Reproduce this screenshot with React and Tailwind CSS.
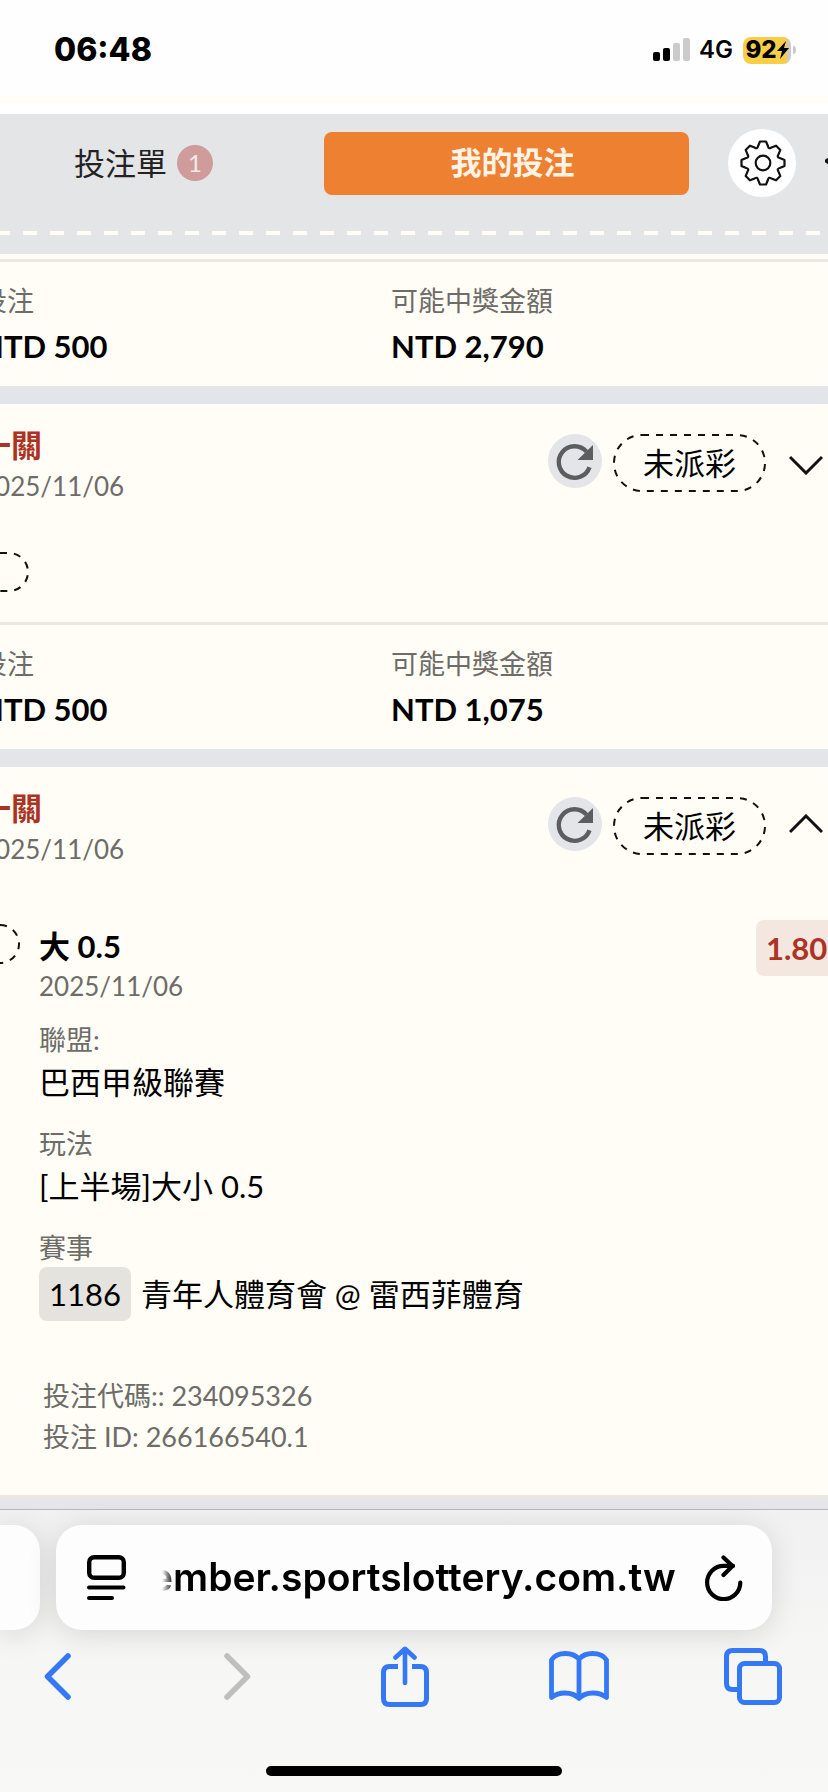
import React from "react";

const GEAR_TEETH = [0, 45, 90, 135, 180, 225, 270, 315];

function gearPath() {
  const rotate = (x, y, deg) => {
    const a = (deg * Math.PI) / 180;
    return `${(x * Math.cos(a) - y * Math.sin(a)).toFixed(2)} ${(x * Math.sin(a) + y * Math.cos(a)).toFixed(2)}`;
  };
  const parts = GEAR_TEETH.map(
    (d, i) =>
      `${i === 0 ? "M" : "L"}${rotate(-3, -21.5, d)} L${rotate(3, -21.5, d)} L${rotate(5, -16.8, d)} Q${rotate(5.6, -13.6, d)} ${rotate(-5, -16.8, d + 45)}`
  );
  return parts.join(" ") + "Z";
}

function GearIcon() {
  return (
    <svg className="size-12" viewBox="-25 -24 48 48" fill="none" stroke="#111" strokeWidth="2.2" strokeLinejoin="round">
      <path d={gearPath()} />
      <circle r="7.3" />
    </svg>
  );
}

function DashedOutline({ radius }) {
  return (
    <svg className="absolute inset-px h-[calc(100%-2px)] w-[calc(100%-2px)] overflow-visible" aria-hidden="true">
      <rect width="100%" height="100%" rx={radius} fill="none" stroke="#111" strokeWidth="2" strokeDasharray="7 7" />
    </svg>
  );
}

function StatusBar() {
  return (
    <div className="flex h-24 items-center justify-between bg-[#fefefe] pt-1 pr-8 pl-[54px] font-['Inter',sans-serif] text-black">
      <span className="text-[32px] font-extrabold">06:48</span>
      <div className="flex items-center">
        <svg className="h-6 w-[38px]" viewBox="0 0 38 24">
          <rect x="0" y="14" width="7" height="9" rx="2" />
          <rect x="10" y="10" width="7" height="13" rx="2" />
          <rect x="20" y="5" width="7" height="18" rx="2" fill="#cbcbcb" />
          <rect x="30" y="0" width="7" height="23" rx="2" fill="#cbcbcb" />
        </svg>
        <span className="ml-2 text-2xl font-semibold">4G</span>
        <div className="ml-2.5 flex h-[27px] w-12 items-center justify-center rounded-lg bg-linear-to-r from-[#f7ce46] from-92% to-[#cbcbcb] to-92%">
          <span className="text-2xl font-extrabold">92</span>
          <svg className="h-[18px] w-3" viewBox="0 0 12 18">
            <path d="M9 0 L0 10 H5 L3 18 L12 7 H7Z" />
          </svg>
        </div>
        <span className="ml-0.5 h-2 w-[3px] rounded-r-full bg-[#cbcbcb]" />
      </div>
    </div>
  );
}

function Tabs() {
  return (
    <header className="border-t-[11px] border-white bg-[#e4e5e7]">
      <div className="flex h-[98px] items-center overflow-hidden">
        <div className="flex w-[324px] shrink-0 pl-[74px]">
          <button type="button" className="flex items-center gap-2.5 text-[31px] text-[#222]">
            投注單
            <span className="flex size-9 items-center justify-center rounded-full bg-[#cf9b9b] text-2xl text-[#f3eae8]">1</span>
          </button>
        </div>
        <button type="button" className="h-[63px] grow rounded-lg bg-[#ee8131] pb-0.5 pl-3 text-[31px] font-bold text-[#fff3e6]">
          我的投注
        </button>
        <button type="button" aria-label="設定" className="ml-[39px] flex size-[68px] shrink-0 items-center justify-center rounded-full bg-white">
          <GearIcon />
        </button>
        <button type="button" aria-label="返回" className="ml-[29px] h-6 w-[3px] shrink-0 overflow-hidden">
          <svg className="h-6 w-[3px]" viewBox="0 0 3 24" fill="none" stroke="#111" strokeWidth="3">
            <path d="M8 5 L1 10 L8 15" />
          </svg>
        </button>
      </div>
      <div className="h-[42px] pt-[19px]">
        <svg className="block h-1 w-full" aria-hidden="true">
          <line x1="-4" y1="2" x2="100%" y2="2" stroke="#fffdf5" strokeWidth="4" strokeDasharray="14 13" />
        </svg>
      </div>
    </header>
  );
}

function Figure({ label, value }) {
  return (
    <div className="flex flex-col">
      <dt className="text-[27px] leading-10 text-[#6d6c68]">{label}</dt>
      <dd className="text-[31px] leading-[50px] font-bold text-black">{value}</dd>
    </div>
  );
}

function Stakes({ stake, payout }) {
  return (
    <dl className="-ml-5 grid h-[127px] grid-cols-[411px_1fr] border-t-[3px] border-[#e9e7e0] pt-[19px]">
      <Figure label="投注" value={stake} />
      <Figure label="可能中獎金額" value={payout} />
    </dl>
  );
}

function Divider() {
  return <div className="h-[18px] bg-[#e4e5e8]" />;
}

function BetHeader({ open }) {
  return (
    <div className="-ml-5 flex justify-between pt-5 pr-[5px]">
      <div>
        <h2 className="text-[31px] leading-[42px] font-bold text-[#ac3324]">一關</h2>
        <p className="text-[26px] leading-10 text-[#6d6c68]">2025/11/06</p>
      </div>
      <div className="flex h-[78px] items-center">
        <button type="button" aria-label="重新整理" className="mr-[11px] mb-1 flex size-[54px] items-center justify-center rounded-full bg-[#e4e5e8]">
          <svg className="size-[54px]" viewBox="0 0 54 54">
            <path d="M41.5 33.2 A15.8 15.8 0 1 1 38.5 17.6" fill="none" stroke="#5c5d5f" strokeWidth="4.4" />
            <path d="M45 11 V26 H29.5Z" fill="#5c5d5f" />
          </svg>
        </button>
        <span className="relative flex h-[58px] w-[153px] items-center justify-center text-[31px] text-black">
          <DashedOutline radius="28" />
          未派彩
        </span>
        <button type="button" aria-label={open ? "收合" : "展開"} className={open ? "mb-1 ml-[23px] flex h-7 w-[34px] items-center" : "mt-1 ml-[23px] flex h-7 w-[34px] items-center"}>
          <svg className="h-[20px] w-[34px]" viewBox="0 0 34 20" fill="none" stroke="#111" strokeWidth="3">
            <path d={open ? "M1 18 L17 2 L33 18" : "M1 2 L17 18 L33 2"} />
          </svg>
        </button>
      </div>
    </div>
  );
}

function Detail({ label, children }) {
  return (
    <div className="pt-4">
      <dt className="text-[27px] leading-[38px] text-[#6d6c68]">{label}</dt>
      <dd className="pb-1 text-[31px] leading-[46px] text-black">{children}</dd>
    </div>
  );
}

function OpenBet() {
  return (
    <article>
      <BetHeader open />
      <div className="-ml-5 flex pt-[51px] pb-[38px]">
        <span className="relative mt-1 h-10 w-10 shrink-0">
          <DashedOutline radius="19" />
        </span>
        <div className="ml-[19px] grow">
          <p className="text-[31px] leading-[52px] font-bold text-black">大 0.5</p>
          <p className="text-[26px] leading-7 text-[#6d6c68]">2025/11/06</p>
          <dl className="pt-[5px]">
            <Detail label="聯盟:">巴西甲級聯賽</Detail>
            <Detail label="玩法">[上半場]大小 0.5</Detail>
            <Detail label="賽事">
              <span className="flex items-center gap-2.5">
                <span className="rounded-lg bg-[#e5e3dd] px-2.5 leading-[54px]">1186</span>
                青年人體育會 @ 雷西菲體育
              </span>
            </Detail>
          </dl>
          <div className="pt-[50px] pl-1 text-[27px] leading-[41px] text-[#6d6c68]">
            <p>投注代碼:: 234095326</p>
            <p>投注 ID: 266166540.1</p>
          </div>
        </div>
        <span className="h-14 w-[72px] shrink-0 rounded-l-lg bg-[#f4e7df] pl-2.5 text-[31px] leading-[56px] font-bold text-[#ac3324]">
          1.80
        </span>
      </div>
    </article>
  );
}

function NavButton({ label, children }) {
  return (
    <button type="button" aria-label={label} className="flex h-16 w-[62px] items-center justify-center">
      {children}
    </button>
  );
}

function BrowserBar() {
  return (
    <footer className="border-t border-[#b9b9bd] bg-linear-to-b from-[#f1f1f2] via-[#f6f6f5] to-[#f8f8f6]">
      <div className="flex gap-4 pt-[15px] pr-14">
        <div className="h-[105px] w-10 shrink-0 rounded-r-[26px] bg-[#fdfdfd] shadow-[0_4px_30px_rgba(0,0,0,0.13)]" />
        <div className="flex h-[105px] grow items-center rounded-[26px] bg-[#fdfdfd] pr-[29px] pl-[31px] shadow-[0_4px_30px_rgba(0,0,0,0.13)]">
          <button type="button" aria-label="頁面選單" className="shrink-0">
            <svg className="h-[45px] w-[39px]" viewBox="0 0 39 45" fill="none" stroke="#000" strokeWidth="4" strokeLinecap="round">
              <rect x="2.2" y="2.2" width="34.6" height="20.6" rx="5" strokeWidth="4.4" />
              <path d="M2 32.5 H36.5 M2 43 H25" />
            </svg>
          </button>
          <input
            aria-label="網址"
            type="text"
            readOnly
            value="ember.sportslottery.com.tw"
            className="ml-6 w-0 grow mask-l-from-[531px] mask-l-to-[543px] bg-transparent font-['Inter',sans-serif] text-[39px] font-semibold text-black outline-none"
          />
          <button type="button" aria-label="重新載入" className="shrink-0">
            <svg className="h-[46px] w-[38px]" viewBox="0 0 38 46" fill="none" stroke="#000" strokeWidth="4.2" strokeLinecap="round" strokeLinejoin="round">
              <path d="M35.3 27.5 A16.6 16.6 0 1 1 18.7 10.9 H28" />
              <path d="M18.5 2.5 L27.5 11 L18.5 20" />
            </svg>
          </button>
        </div>
      </div>
      <nav className="flex justify-between pt-3.5 pr-11 pl-[26px] text-[#3478f6]">
        <NavButton label="上一頁">
          <svg className="h-[47px] w-[27px]" viewBox="0 0 27 47" fill="none" stroke="currentColor" strokeWidth="5.5" strokeLinecap="round" strokeLinejoin="round">
            <path d="M24 3 L3.5 23.5 L24 44" />
          </svg>
        </NavButton>
        <NavButton label="下一頁">
          <svg className="ml-3 h-[47px] w-[27px] text-[#bfbfbd]" viewBox="0 0 27 47" fill="none" stroke="currentColor" strokeWidth="5.5" strokeLinecap="round" strokeLinejoin="round">
            <path d="M3 3 L23.5 23.5 L3 44" />
          </svg>
        </NavButton>
        <NavButton label="分享">
          <svg className="h-[61px] w-12" viewBox="0 0 48 61" fill="none" stroke="currentColor" strokeWidth="5" strokeLinejoin="round">
            <path d="M17 20.5 H8.5 Q2.5 20.5 2.5 26.5 V52.5 Q2.5 58.5 8.5 58.5 H39.5 Q45.5 58.5 45.5 52.5 V26.5 Q45.5 20.5 39.5 20.5 H31" />
            <path d="M24 37 V3 M14.5 11.5 L24 2.8 L33.5 11.5" strokeWidth="4.6" strokeLinecap="round" />
          </svg>
        </NavButton>
        <NavButton label="書籤">
          <svg className="h-[51px] w-[60px]" viewBox="0 0 60 51" fill="none" stroke="currentColor" strokeWidth="4.8" strokeLinecap="round" strokeLinejoin="round">
            <path d="M30 8 Q25 2.5 16.5 2.5 Q6.5 2.5 2.5 9 V46.5 Q8 42 16 42 Q25 42 30 47.5 Q35 42 44 42 Q52 42 57.5 46.5 V9 Q53.5 2.5 43.5 2.5 Q35 2.5 30 8 V47" />
          </svg>
        </NavButton>
        <NavButton label="分頁">
          <svg className="h-[57px] w-[58px]" viewBox="0 0 58 57" fill="none" stroke="currentColor" strokeWidth="5">
            <rect x="15.5" y="15.5" width="40" height="39" rx="5" />
            <path d="M41.5 13 V8.5 Q41.5 2.5 35.5 2.5 H8.5 Q2.5 2.5 2.5 8.5 V35.5 Q2.5 41.5 8.5 41.5 H13" />
          </svg>
        </NavButton>
      </nav>
      <div className="flex justify-center pt-[58px] pb-4">
        <span className="h-2.5 w-[296px] rounded-full bg-black" />
      </div>
    </footer>
  );
}

export default function App() {
  return (
    <div className="min-h-screen overflow-hidden bg-[#fffdf5] font-['Lato','Noto_Sans_CJK_TC',sans-serif]">
      <StatusBar />
      <div className="pt-[7px]">
        <Tabs />
      </div>
      <main className="pt-[5px]">
        <Stakes stake="NTD 500" payout="NTD 2,790" />
        <Divider />
        <article>
          <BetHeader />
          <div className="-ml-5 h-[116px] pt-[46px]">
            <span className="relative block h-10 w-[49px]">
              <DashedOutline radius="19" />
            </span>
          </div>
          <Stakes stake="NTD 500" payout="NTD 1,075" />
        </article>
        <Divider />
        <OpenBet />
        <div className="h-3.5 border-t-[3px] border-[#e9e7e0] bg-[#e6e6e9]" />
      </main>
      <BrowserBar />
    </div>
  );
}
